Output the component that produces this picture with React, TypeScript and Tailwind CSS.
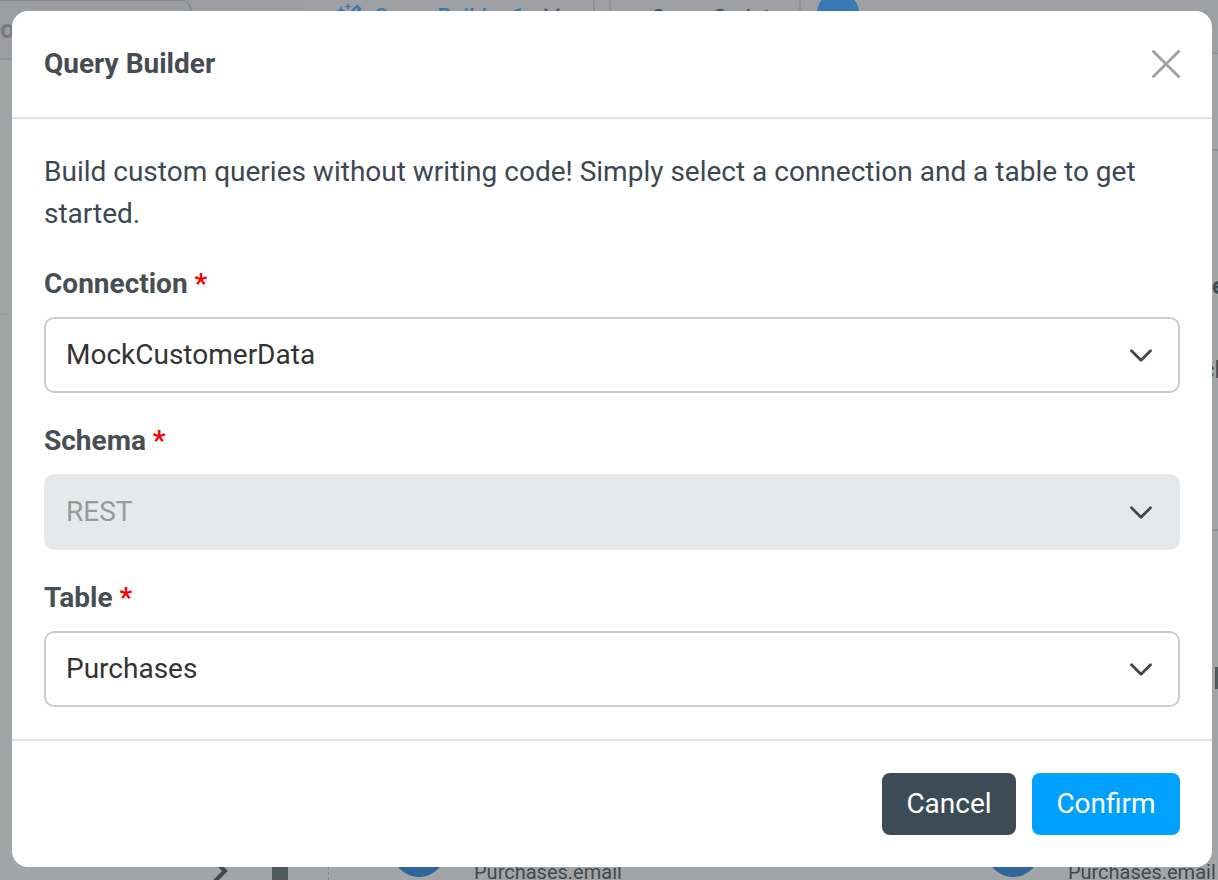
import { useState } from "react";
import { X } from "lucide-react";
import clsx from "clsx";

const fields = [
  { id: "connection", label: "Connection", options: ["MockCustomerData"], disabled: false },
  { id: "schema", label: "Schema", options: ["REST"], disabled: true },
  { id: "table", label: "Table", options: ["Purchases"], disabled: false },
];

export default function App() {
  return (
    <div className="relative h-screen min-h-[880px] overflow-hidden bg-[#a1a5a6] font-[Roboto,sans-serif]">
      <Workspace />

      {/* Dialog layer */}
      <div className="absolute inset-0 pt-[11px] pr-1.5 pl-3">
        <QueryDialog />
      </div>
    </div>
  );
}

function QueryDialog() {
  return (
    <section
      role="dialog"
      aria-modal="true"
      aria-labelledby="dialog-title"
      className="rounded-2xl bg-white text-[28px] leading-[42px] text-[#3d4752]"
    >
      <header className="flex items-center justify-between border-b-2 border-[#dfe3e6] px-8 py-8">
        <h2 id="dialog-title" className="font-bold text-[#464c52]">
          Query Builder
        </h2>
        <button type="button" aria-label="Close">
          <svg viewBox="0 0 28 28" className="h-7 w-7" fill="none" stroke="#a0a0a0" strokeWidth="2.8" strokeLinecap="round">
            <path d="M1.4 1.4 26.6 26.6M26.6 1.4 1.4 26.6" />
          </svg>
        </button>
      </header>

      <form className="flex flex-col gap-7 px-8 py-8">
        <p>
          Build custom queries without writing code! Simply select a connection and a table to get
          started.
        </p>
        <div className="flex flex-col gap-[27px]">
          {fields.map((field) => (
            <SelectField key={field.id} {...field} />
          ))}
        </div>
      </form>

      <footer className="flex justify-end gap-4 border-t-2 border-[#dfe3e6] px-8 py-8 text-white">
        <button type="button" className="min-w-[134px] rounded-lg bg-[#3d4b56] px-6 py-2.5">
          Cancel
        </button>
        <button type="button" className="min-w-[148px] rounded-lg bg-[#00a0ff] px-6 py-2.5">
          Confirm
        </button>
      </footer>
    </section>
  );
}

function SelectField({
  id,
  label,
  options,
  disabled,
}: {
  id: string;
  label: string;
  options: string[];
  disabled: boolean;
}) {
  const [value, setValue] = useState(options[0]);

  return (
    <div className="flex flex-col gap-3">
      <label htmlFor={id} className="font-bold text-[#484f54]">
        {label} <span className="text-[#ff0000]">*</span>
      </label>
      <div className="relative">
        <select
          id={id}
          value={value}
          disabled={disabled}
          onChange={(e) => setValue(e.target.value)}
          className={clsx(
            "block h-[76px] w-full appearance-none rounded-[10px] border-2 px-5 opacity-100",
            disabled
              ? "border-[#e5e9eb] bg-[#e5e9eb] text-[#999999]"
              : "border-[#cccccc] bg-white text-[#333333]",
          )}
        >
          {options.map((option) => (
            <option key={option}>{option}</option>
          ))}
        </select>
        <svg
          viewBox="0 0 24 14"
          className="pointer-events-none absolute top-8 right-[27px] h-3.5 w-6"
          fill="none"
          stroke="#41474e"
          strokeWidth="2.8"
          strokeLinecap="round"
          strokeLinejoin="round"
        >
          <path d="M2.5 1.8 12 11.3 21.5 1.8" />
        </svg>
      </div>
    </div>
  );
}

/* Dimmed page behind the dialog */
function Workspace() {
  return (
    <div className="flex h-full" aria-hidden="true">
      <aside className="flex w-[303px] shrink-0 flex-col">
        <div className="h-[60px] border-b-2 border-[#8d9193] bg-[#9c9ea1]">
          <div className="h-12 w-48 rounded-tr-[10px] border-t border-r-2 border-[#85898c] pt-2.5 text-[26px] leading-9 font-bold text-[#777b7d]">
            o
          </div>
        </div>
        <div className="h-[255px] border-b border-[#999d9e]" />
        <div className="grow" />
        <div className="flex h-7 items-end justify-end gap-11 pr-[15px]">
          <svg viewBox="0 0 16 24" className="h-6 w-4" fill="none" stroke="#41484b" strokeWidth="4">
            <path d="M2 4 13 15 2 26" />
          </svg>
          <div className="h-5 w-4 bg-[#505b5e]" />
        </div>
      </aside>

      <main className="flex min-w-0 grow flex-col">
        <nav className="flex h-[54px] border-b border-[#8d9193] bg-[#9d9fa2] text-[22px] leading-7">
          <div className="flex w-[292px] items-start gap-3 border-r-2 border-[#8f9295] pt-[3px] pl-8 text-[#347bb4]">
            <MagicWand />
            <span className="font-medium whitespace-nowrap">Query Builder 1</span>
            <X size={26} className="ml-0.5 shrink-0 text-[#484d51]" />
          </div>
          <div className="ml-3.5 w-[192px] border-x-2 border-[#929598] pt-1 pl-10 text-[#484d51]">
            Query Script
          </div>
          <div className="-mt-2 ml-4 h-[42px] w-[42px] rounded-full bg-[#3779b4]" />
        </nav>
        <div className="flex grow flex-col items-end text-2xl font-bold text-[#3f4d53]">
          <div className="h-[97px] w-1.5 border-b-2 border-[#8c9092]" />
          <div className="h-[380px] w-4 border-b-2 border-[#8c9092] pt-[119px] whitespace-nowrap">
            <p className="pl-2.5">e</p>
            <p className="pt-[52px] font-normal">ch</p>
          </div>
          <div className="mt-[136px] h-[22px] w-[3px] bg-[#50595f]" />
        </div>
        <div className="ml-[25px] flex h-[50px] items-end gap-[364px] border-l border-dashed border-[#85898b] pl-[63px] text-xl leading-6 text-[#43494e]">
          <JoinField />
          <JoinField />
        </div>
      </main>
    </div>
  );
}

function MagicWand() {
  return (
    <svg viewBox="0 0 27 27" className="h-[27px] w-[27px] shrink-0" fill="currentColor">
      <path d="M6 3 7.5 6.5 11 8 7.5 9.5 6 13 4.5 9.5 1 8 4.5 6.5ZM13 0 14 2.5 16.5 3.5 14 4.5 13 7 12 4.5 9.5 3.5 12 2.5Z" />
      <path d="M5 22 22 3 25 6 8 25Z" fill="none" stroke="currentColor" strokeWidth="2.5" strokeLinejoin="round" />
    </svg>
  );
}

function JoinField() {
  return (
    <div className="flex shrink-0 items-end gap-7">
      <div className="mb-[3px] h-[54px] w-[54px] rounded-full bg-[#30669a]" />
      <span className="-mb-1">Purchases.email</span>
    </div>
  );
}
